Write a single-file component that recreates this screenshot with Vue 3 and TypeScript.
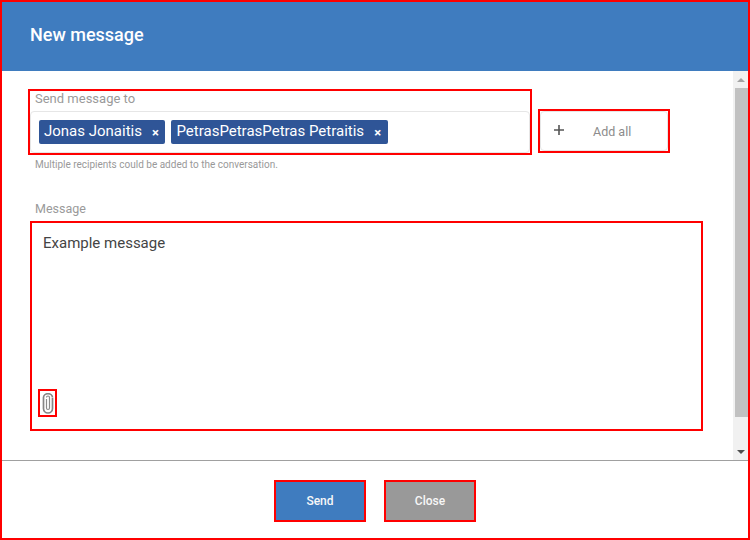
<script setup lang="ts">
const recipients: string[] = ['Jonas Jonaitis', 'PetrasPetrasPetras Petraitis']
</script>

<template>
  <div class="dialog">
    <header class="head">New message</header>
    <div class="middle">
      <div class="content">
        <div class="to-row">
          <div class="to-frame">
            <div class="label">Send message to</div>
            <div class="tags">
              <span v-for="r in recipients" :key="r" class="tag">
                <span>{{ r }}</span><span class="x">×</span>
              </span>
            </div>
          </div>
          <div class="add-frame">
            <div class="add">
              <svg class="plus" width="10" height="10" viewBox="0 0 10 10"><path d="M5 0v10M0 5h10" stroke="#555" stroke-width="1.6" fill="none" /></svg>
              <span class="add-text">Add all</span>
            </div>
          </div>
        </div>
        <div class="hint">Multiple recipients could be added to the conversation.</div>
        <div class="label msg-label">Message</div>
        <div class="msg-frame">
          <div class="msg-text">Example message</div>
          <div class="clip-frame">
            <svg width="12" height="21" viewBox="0 0 12 21">
              <path d="M4.500 6v9a1.500 1.500 0 0 0 3 0V4.500a1.500 1.500 0 0 0-3 0" fill="none" stroke="#8a8a8a" stroke-width="1.200" />
              <path d="M10.500 5v10.500a4.500 4.500 0 0 1-9 0V4.500a4.500 3.800 0 0 1 9 0" fill="none" stroke="#858585" stroke-width="1.700" />
            </svg>
          </div>
        </div>
      </div>
      <div class="scrollbar">
        <div class="arrow-box"><i class="up"></i></div>
        <div class="track"><div class="thumb"></div></div>
        <div class="arrow-box bottom"><i class="down"></i></div>
      </div>
    </div>
    <footer class="foot">
      <button class="btn send">Send</button>
      <button class="btn close">Close</button>
    </footer>
  </div>
</template>

<style scoped>
.dialog {
  width: 750px;
  height: 540px;
  box-sizing: border-box;
  border: 2px solid #f00;
  display: flex;
  flex-direction: column;
  background: #fff;
  font-family: Roboto, "Liberation Sans", sans-serif;
}
.head {
  height: 69px;
  flex: none;
  background: #3f7cbf;
  color: #fff;
  font-size: 18px;
  font-weight: 500;
  line-height: 65px;
  padding-left: 28px;
}
.middle {
  height: 389px;
  flex: none;
  display: flex;
}
.content {
  flex: 1;
  padding: 18px 0 0 26px;
  min-width: 0;
}
.to-row {
  display: flex;
  align-items: flex-end;
  gap: 6px;
}
.to-frame {
  width: 504px;
  height: 66px;
  box-sizing: border-box;
  border: 2px solid #f00;
  display: flex;
  flex-direction: column;
}
.label {
  font-size: 13px;
  color: #9a9a9a;
  line-height: 16px;
  padding-left: 5px;
}
.tags {
  flex: 1;
  margin-top: 4px;
  border: 1px solid #e6e6e6;
  border-radius: 4px;
  box-sizing: border-box;
  display: flex;
  align-items: center;
  gap: 6px;
  padding: 0 0 0 8px;
}
.tag {
  height: 24px;
  background: #2f5597;
  border-radius: 2px;
  color: #fff;
  font-size: 15px;
  line-height: 23px;
  display: flex;
  padding: 0 7px 0 5px;
  gap: 10.500px;
}
.x {
  font-weight: 700;
  font-size: 13px;
  line-height: 26px;
  width: 6px;
  display: flex;
  justify-content: center;
}
.add-frame {
  width: 132px;
  height: 44px;
  box-sizing: border-box;
  border: 2px solid #f00;
  margin-bottom: 2px;
}
.add {
  height: 100%;
  box-sizing: border-box;
  border: 1px solid #e6e6e6;
  border-radius: 4px;
  display: flex;
  align-items: center;
  padding-left: 13px;
}
.plus {
  margin-top: -2px;
}
.add-text {
  margin-left: 29px;
  font-size: 12.500px;
  color: #8c8c8c;
}
.hint {
  font-size: 10px;
  color: #999;
  padding-left: 7px;
  line-height: 12px;
  margin-top: 4px;
}
.msg-label {
  margin: 30px 0 0 2px;
  font-size: 12.500px;
  line-height: 15px;
}
.msg-frame {
  width: 673px;
  height: 210px;
  box-sizing: border-box;
  margin: 5px 0 0 2px;
  border: 2px solid #f00;
  padding: 11px 0 12px 11px;
  display: flex;
  flex-direction: column;
  justify-content: space-between;
}
.msg-text {
  font-size: 15px;
  line-height: 18px;
  color: #444;
}
.clip-frame {
  width: 19px;
  height: 28px;
  margin-left: -5px;
  box-sizing: border-box;
  border: 2px solid #f00;
  display: flex;
  align-items: center;
  justify-content: center;
}
.scrollbar {
  width: 15px;
  flex: none;
  background: #f1f1f1;
  display: flex;
  flex-direction: column;
}
.arrow-box {
  height: 17px;
  flex: none;
  display: flex;
  align-items: center;
  justify-content: center;
}
.up {
  border: 4px solid transparent;
  border-top: 0;
  border-bottom: 4px solid #a3a3a3;
}
.down {
  border: 4px solid transparent;
  border-bottom: 0;
  border-top: 4px solid #505050;
}
.track {
  flex: 1;
  padding-left: 2px;
}
.thumb {
  height: 329px;
  background: #c1c1c1;
}
.foot {
  flex: 1;
  border-top: 1px solid #a0a0a0;
  display: flex;
  justify-content: center;
  gap: 18px;
  padding-top: 19px;
  align-items: flex-start;
}
.btn {
  width: 92px;
  height: 42px;
  box-sizing: border-box;
  border: 2px solid #f00;
  color: #f7f7f7;
  font-family: inherit;
  font-size: 12px;
  font-weight: 500;
  padding: 0;
}
.send {
  background: #3f7cbf;
}
.close {
  background: #999;
}
</style>

<style>
html, body {
  margin: 0;
  overflow: hidden;
}
</style>
